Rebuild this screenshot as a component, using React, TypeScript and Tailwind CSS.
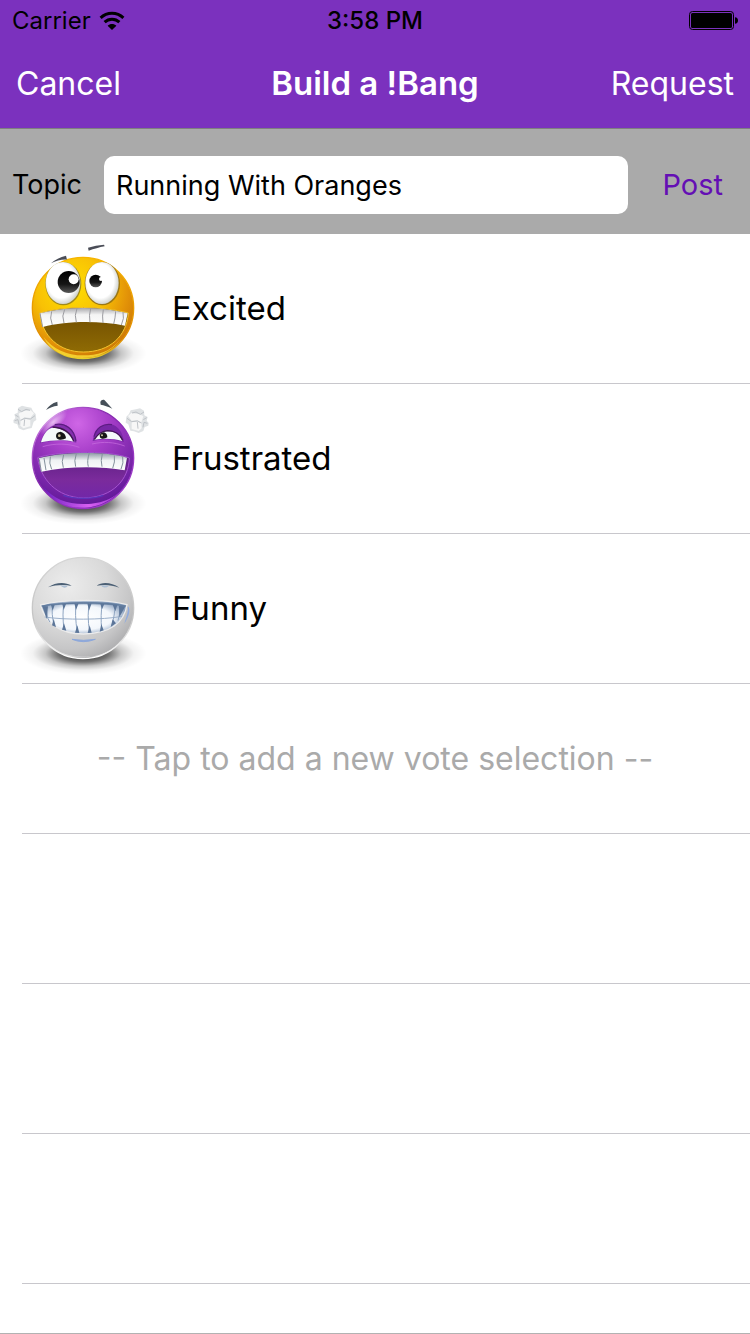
import { useState, type ReactNode } from "react";

function WifiIcon() {
  return (
    <svg width="26" height="20" viewBox="0 0 26 20" role="img" aria-label="Wi-Fi">
      <g fill="none" stroke="#000" strokeWidth="3">
        <path d="M1.6 6.8 C8 .6 18 .6 24.4 6.8" />
        <path d="M5.6 11.2 C9.8 7.2 16.2 7.2 20.4 11.2" />
      </g>
      <path d="M13 19 L8.6 14.7 C11 12.3 15 12.3 17.4 14.7 Z" fill="#000" />
    </svg>
  );
}

function BatteryIcon() {
  return (
    <svg width="49" height="19" viewBox="0 0 49 19" role="img" aria-label="Battery full">
      <rect x=".5" y=".5" width="44" height="18" rx="3" fill="none" stroke="#000" />
      <rect x="2" y="2" width="41" height="15" rx="1.5" fill="#000" />
      <path d="M46 6.2 C48 6.4 49 7.8 49 9.5 S48 12.6 46 12.8 Z" fill="#000" />
    </svg>
  );
}

function Face({ label, id, children }: { label: string; id: string; children: ReactNode }) {
  return (
    <svg
      className="w-40 shrink-0"
      height="149"
      viewBox="0 -6 480 447"
      role="img"
      aria-label={label}
    >
      <defs>
        <radialGradient id={`${id}-shadow`}>
          <stop offset="0" stopColor="#000" stopOpacity=".9" />
          <stop offset=".4" stopColor="#000" stopOpacity=".55" />
          <stop offset=".6" stopColor="#000" stopOpacity=".22" />
          <stop offset=".8" stopColor="#000" stopOpacity=".05" />
          <stop offset="1" stopColor="#000" stopOpacity="0" />
        </radialGradient>
      </defs>
      <ellipse cx="250" cy="352" rx="190" ry="64" fill={`url(#${id}-shadow)`} />
      {children}
    </svg>
  );
}

function ExcitedFace() {
  return (
    <Face label="Excited face" id="excited">
      <defs>
        <radialGradient id="excited-skin" cx=".38" cy=".3" r=".75">
          <stop offset="0" stopColor="#ffe000" />
          <stop offset=".45" stopColor="#f8c105" />
          <stop offset=".75" stopColor="#e39308" />
          <stop offset="1" stopColor="#c97406" />
        </radialGradient>
        <linearGradient id="excited-rim" x1="0" y1="0" x2="0" y2="1">
          <stop offset="0" stopColor="#f7b400" />
          <stop offset=".8" stopColor="#e08c00" />
          <stop offset="1" stopColor="#e3cf2c" />
        </linearGradient>
        <linearGradient id="excited-mouth" x1="0" y1="0" x2="0" y2="1">
          <stop offset="0" stopColor="#6d4a00" />
          <stop offset="1" stopColor="#8f6b04" />
        </linearGradient>
        <radialGradient id="excited-eye" cx=".45" cy=".45" r=".58">
          <stop offset=".7" stopColor="#fff" />
          <stop offset="1" stopColor="#c9ccc8" />
        </radialGradient>
        <linearGradient id="excited-pupil" x1="0" y1="0" x2="0" y2="1">
          <stop offset="0" stopColor="#000" />
          <stop offset=".6" stopColor="#151515" />
          <stop offset="1" stopColor="#5a5a5a" />
        </linearGradient>
        <linearGradient id="excited-teeth" x1="0" y1="0" x2="0" y2="1">
          <stop offset="0" stopColor="#a9a9ad" />
          <stop offset=".35" stopColor="#f4f4f4" />
          <stop offset="1" stopColor="#fff" />
        </linearGradient>
      </defs>
      <circle cx="249" cy="216" r="152" fill="url(#excited-skin)" stroke="url(#excited-rim)" strokeWidth="4" />
      <path d="M130 302 C170 385 310 388 362 308 C330 350 290 358 250 358 C200 358 160 340 130 302 Z" fill="#fbe038" opacity=".8" />
      <path d="M153 82 C166 70 180 64 198 59 L201 71 C184 70 168 75 153 82 Z" fill="#4a4d57" />
      <path d="M264 35 C280 30 296 27 312 26 L314 31 C298 34 282 39 266 44 Z" fill="#4a4d57" />
      <ellipse cx="190" cy="143" rx="54" ry="65" fill="#a08a1a" />
      <ellipse cx="307" cy="143" rx="53" ry="65" fill="#9b7714" />
      <ellipse cx="189" cy="141" rx="52" ry="63" fill="url(#excited-eye)" />
      <ellipse cx="306" cy="141" rx="50" ry="63" fill="url(#excited-eye)" />
      <circle cx="206" cy="138" r="33" fill="url(#excited-pupil)" />
      <circle cx="221" cy="130" r="15" fill="#fff" />
      <circle cx="287" cy="135" r="19" fill="url(#excited-pupil)" />
      <circle cx="303" cy="129" r="6" fill="#fff" />
      <path
        d="M118 231 C200 209 300 209 385 231 C380 300 330 348 250 348 C178 348 128 302 118 231 Z"
        fill="url(#excited-mouth)"
        stroke="#f5c42c"
        strokeWidth="3"
      />
      <path d="M120 232 C200 211 300 211 383 232 L375 269 C300 254 200 254 128 273 Z" fill="url(#excited-teeth)" />
      <path
        d="M128 273 L120 232 M155 226 Q148 246 157 267 M194 220 Q184 240 192 261 M231 217 Q222 238 229 259 M272 217 Q266 238 270 259 M310 220 Q306 240 309 261 M347 226 Q346 246 341 264 M369 229 Q374 246 364 267"
        fill="none"
        stroke="#9b9ba0"
        strokeWidth="3"
      />
    </Face>
  );
}

function Fist({ transform }: { transform?: string }) {
  return (
    <g transform={transform}>
      <path
        d="M40 103 L46 96 L43 85 L53 80 L54 66 L66 59 L78 62 L94 65 L99 76 L107 84 L109 102 L101 107 L95 126 L84 128 L70 133 L56 127 L52 115 L41 111 Z"
        fill="#dfe2e4"
      />
      <path
        d="M56 83 L68 76 L92 73 L102 82 L91 96 L74 94 L62 101 Z M62 104 L75 98 L91 101 L91 121 L70 127 L61 119 Z"
        fill="#f7f7f7"
      />
      <path
        d="M54 70 L65 77 L78 70 L90 73 M46 87 L56 93 M44 104 L54 101 L57 116 M62 103 L74 97 L91 99 L105 89 M74 100 L72 120"
        fill="none"
        stroke="#bfc3c8"
        strokeWidth="3"
      />
    </g>
  );
}

function FrustratedFace() {
  return (
    <Face label="Frustrated face" id="frustrated">
      <defs>
        <radialGradient id="frustrated-skin" cx=".45" cy=".16" r=".85">
          <stop offset="0" stopColor="#cf66e6" />
          <stop offset=".35" stopColor="#a83fca" />
          <stop offset=".7" stopColor="#8029ae" />
          <stop offset="1" stopColor="#5c1795" />
        </radialGradient>
        <linearGradient id="frustrated-rim" x1="0" y1="0" x2="1" y2="1">
          <stop offset="0" stopColor="#dc92ee" />
          <stop offset=".4" stopColor="#8427ae" />
          <stop offset="1" stopColor="#a43fd0" />
        </linearGradient>
        <linearGradient id="frustrated-mouth" x1="0" y1="0" x2="0" y2="1">
          <stop offset="0" stopColor="#5a1d80" />
          <stop offset=".6" stopColor="#7b2b9c" />
          <stop offset="1" stopColor="#7227a8" />
        </linearGradient>
        <linearGradient id="frustrated-teeth" x1="0" y1="0" x2="0" y2="1">
          <stop offset="0" stopColor="#8e9ba6" />
          <stop offset=".4" stopColor="#f0f3f4" />
          <stop offset="1" stopColor="#fff" />
        </linearGradient>
        <linearGradient id="frustrated-glow" x1="0" y1="0" x2="1" y2="0">
          <stop offset="0" stopColor="#6c1fc0" />
          <stop offset=".55" stopColor="#d860f2" />
          <stop offset="1" stopColor="#8a2cc8" />
        </linearGradient>
        <radialGradient id="frustrated-shine">
          <stop offset="0" stopColor="#fbe3ff" stopOpacity=".75" />
          <stop offset="1" stopColor="#fbe3ff" stopOpacity="0" />
        </radialGradient>
      </defs>
      <Fist />
      <Fist transform="matrix(-1 0 0 1 486 8)" />
      <circle cx="249" cy="216" r="152" fill="url(#frustrated-skin)" stroke="url(#frustrated-rim)" strokeWidth="4" />
      <ellipse cx="160" cy="108" rx="52" ry="22" transform="rotate(-42 160 108)" fill="url(#frustrated-shine)" />
      <path d="M130 302 C170 385 320 392 378 290 C350 345 290 354 250 354 C200 354 160 338 130 302 Z" fill="url(#frustrated-glow)" />
      <path d="M138 72 C146 60 156 51 172 47 L173 59 C160 60 149 65 138 72 Z" fill="#465059" />
      <path d="M301 48 C304 42 309 40 314 43 L337 68 C324 61 312 58 302 56 Z" fill="#465059" />
      <path d="M119 172 C132 135 150 115 180 114 C208 114 225 138 229 170 C190 161 152 164 119 172 Z" fill="#8430ae" />
      <path d="M278 165 C284 128 308 112 333 115 C354 119 369 140 372 168 C340 158 310 158 278 165 Z" fill="#7827a6" />
      <path d="M123 169 C130 142 146 124 162 125 C190 128 212 142 221 167 C190 160 152 163 123 169 Z" fill="#f5fafa" />
      <path d="M283 161 C290 147 303 137 322 136 C344 136 361 148 367 165 C340 157 310 157 283 161 Z" fill="#f5fafa" />
      <path d="M168 150 Q168 138 182 137 Q197 141 198 157 Q190 162 179 161 Q168 159 168 150 Z" fill="#171717" />
      <path d="M299 149 Q301 140 312 139 Q322 142 322 154 Q315 159 306 158 Q299 156 299 149 Z" fill="#171717" />
      <circle cx="178" cy="149" r="4" fill="#cfc6a0" />
      <circle cx="306" cy="148" r="3" fill="#cfc6a0" />
      <path d="M158 123 C188 125 212 140 221 166 M283 160 C293 145 304 135 323 134 C344 134 361 146 368 163" fill="none" stroke="#3f164f" strokeWidth="4" />
      <path d="M164 116 C194 108 224 130 228 166 M282 152 C288 126 310 111 336 116" fill="none" stroke="#5c1c82" strokeWidth="4" />
      <path d="M128 182 C165 171 205 172 238 184 M276 174 C310 166 342 168 374 180" fill="none" stroke="#c86ee0" strokeWidth="3" opacity=".7" />
      <path
        d="M113 215 C160 198 320 190 388 216 C386 280 340 335 250 336 C170 334 122 280 113 215 Z"
        fill="url(#frustrated-mouth)"
        stroke="#a552cf"
        strokeWidth="3"
      />
      <path d="M116 217 C190 198 310 195 381 215 L374 253 C300 240 205 240 124 257 Z" fill="url(#frustrated-teeth)" />
      <path
        d="M124 257 L118 220 M132 216 L138 253 M151 212 Q146 232 155 250 M191 206 Q183 228 190 245 M229 203 Q221 225 227 242 M268 201 Q260 225 265 242 M307 203 Q301 225 306 242 M343 208 Q346 228 338 247 M368 213 Q372 230 363 249"
        fill="none"
        stroke="#84919c"
        strokeWidth="3"
      />
      <path d="M190 328 C220 340 280 340 310 328" fill="none" stroke="#5b35ba" strokeWidth="4" />
    </Face>
  );
}

function FunnyFace() {
  return (
    <Face label="Funny face" id="funny">
      <defs>
        <radialGradient id="funny-skin" cx=".35" cy=".28" r=".78">
          <stop offset="0" stopColor="#ececec" />
          <stop offset=".5" stopColor="#dadada" />
          <stop offset=".8" stopColor="#c6c6c7" />
          <stop offset="1" stopColor="#acacae" />
        </radialGradient>
        <linearGradient id="funny-rim" x1="0" y1="0" x2="0" y2="1">
          <stop offset="0" stopColor="#d6d6d6" />
          <stop offset=".6" stopColor="#c4c4c4" />
          <stop offset="1" stopColor="#ffffff" />
        </linearGradient>
        <radialGradient id="funny-teeth" cx=".47" cy=".52" r=".55">
          <stop offset="0" stopColor="#fff" />
          <stop offset=".65" stopColor="#f3f7fc" />
          <stop offset="1" stopColor="#8ba1bf" />
        </radialGradient>
      </defs>
      <circle cx="249" cy="216" r="152" fill="url(#funny-skin)" stroke="url(#funny-rim)" strokeWidth="4" />
      <path d="M130 308 C180 382 320 384 370 304 C325 366 285 362 245 362 C200 361 165 346 130 308 Z" fill="#f4f4f4" opacity=".8" />
      <path d="M383 211 C392 215 390 240 373 263 C380 240 386 225 383 211 Z" fill="#8fabdf" />
      <path d="M144 154 C166 140 194 136 215 150 C192 145 166 147 144 154 Z" fill="#4c6075" />
      <path d="M290 149 C306 137 335 139 358 155 C334 146 312 145 290 149 Z" fill="#4c6075" />
      <path d="M180 148 Q194 162 204 149 Z M302 148 Q312 161 328 149 Z" fill="#adbfd4" />
      <path
        d="M122 207 C190 190 310 188 381 206 C373 260 330 293 250 294 C180 294 135 260 122 207 Z"
        fill="url(#funny-teeth)"
        stroke="#ececec"
        strokeWidth="4"
      />
      <path
        d="M125 210 C190 197 310 194 377 210 C310 201 190 201 125 210 Z"
        fill="#5f7a9d"
        stroke="#5f7a9d"
        strokeWidth="2"
      />
      <path d="M134 243 C190 252 310 252 366 241" fill="none" stroke="#9db1cb" strokeWidth="3" />
      <path
        d="M137 211 L143 246 L150 259 M158 208 Q153 232 163 270 M192 204 Q186 230 192 282 M229 202 Q223 232 232 290 M269 202 Q260 232 269 290 M307 204 Q301 232 305 284 M344 207 Q346 230 336 268 M364 211 L354 254"
        fill="none"
        stroke="#8fa5c2"
        strokeWidth="3"
      />
      <path
        d="M153 207 L158 224 L164 207 Z M187 204 L191 222 L198 204 Z M223 202 L228 222 L236 202 Z M262 202 L267 224 L275 202 Z M301 203 L306 220 L313 204 Z M338 206 L346 226 L352 207 Z M127 210 L140 250 L144 211 Z M357 210 L358 244 L376 211 Z M186 281 L192 262 L199 284 Z M225 290 L232 268 L238 291 Z M263 291 L269 268 L275 290 Z M299 287 L304 264 L311 283 Z M332 273 L338 250 L348 262 Z M156 268 L161 248 L168 274 Z"
        fill="#5c7699"
      />
      <path d="M216 310 Q250 324 286 310 Q250 316 216 310 Z" fill="#8da8db" stroke="#8da8db" strokeWidth="3" />
    </Face>
  );
}

const choices = [
  { name: "Excited", face: <ExcitedFace /> },
  { name: "Frustrated", face: <FrustratedFace /> },
  { name: "Funny", face: <FunnyFace /> },
];

function Row({ children }: { children?: ReactNode }) {
  return (
    <li>
      <div className="flex h-[149px] items-center">{children}</div>
      <div className="ml-[22px] h-px bg-[#c8c7cc]" />
    </li>
  );
}

export default function App() {
  const [topic, setTopic] = useState("Running With Oranges");

  return (
    <div className="flex min-h-screen flex-col border-b border-[#b2b2b2] bg-white font-['Inter',sans-serif] text-black">
      <header className="border-b border-[#7f7f7f] bg-[#7b31be]">
        <div className="grid h-10 grid-cols-3 items-center px-3 pt-px text-2xl">
          <div className="flex items-center gap-2">
            <span>Carrier</span>
            <WifiIcon />
          </div>
          <time className="text-center font-medium">3:58 PM</time>
          <div className="flex justify-end">
            <BatteryIcon />
          </div>
        </div>
        <nav className="grid h-[88px] grid-cols-[1fr_auto_1fr] items-center px-4 text-[32px] text-white">
          <button type="button" className="justify-self-start">Cancel</button>
          <h1 className="text-[33px] font-semibold">Build a !Bang</h1>
          <button type="button" className="justify-self-end">Request</button>
        </nav>
      </header>

      <form
        className="flex items-center bg-[#aaaaaa] pt-[27px] pr-[27px] pb-5 pl-3 text-[27px]"
        onSubmit={(event) => event.preventDefault()}
      >
        <label htmlFor="topic" className="mr-[22px]">Topic</label>
        <input
          id="topic"
          type="text"
          value={topic}
          onChange={(event) => setTopic(event.target.value)}
          className="h-[58px] min-w-0 flex-1 rounded-[10px] bg-white px-3 outline-none"
        />
        <button type="submit" className="ml-[34px] text-[29px] text-[#640fb4]">Post</button>
      </form>

      <ul>
        {choices.map((choice) => (
          <Row key={choice.name}>
            {choice.face}
            <span className="ml-3 text-[33px]">{choice.name}</span>
          </Row>
        ))}
        <Row>
          <button type="button" className="h-full w-full text-[32px] text-[#aaaaaa]">
            -- Tap to add a new vote selection --
          </button>
        </Row>
        <Row />
        <Row />
        <Row />
      </ul>
    </div>
  );
}
